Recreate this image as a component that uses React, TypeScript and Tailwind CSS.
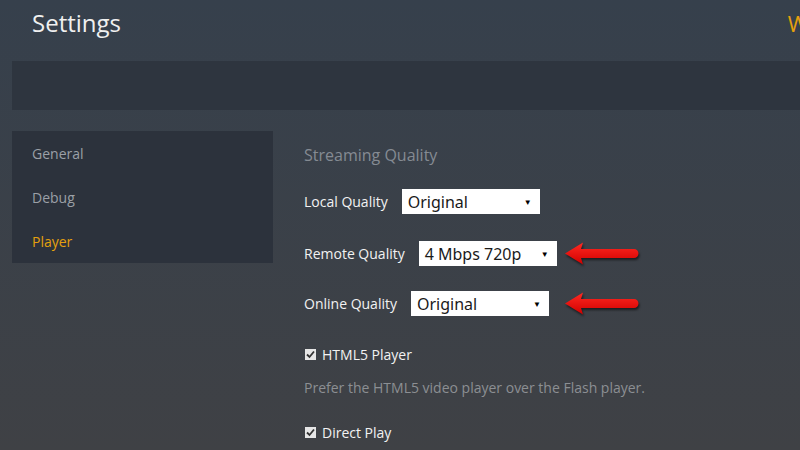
import React from 'react';

const Arrow = () => (
  <svg width="78" height="26" viewBox="0 0 78 26" className="drop-shadow-[1px_2px_1px_rgba(0,0,0,0.55)]">
    <defs>
      <linearGradient id="arrowFill" x1="0" y1="0" x2="0" y2="1">
        <stop offset="0" stopColor="#ff2a22" />
        <stop offset="1" stopColor="#d10000" />
      </linearGradient>
    </defs>
    <path
      d="M1 12.5 L19 1.5 L17 8 L70 8 A4.5 4.5 0 0 1 70 17 L17 17 L19 23.5 Z"
      fill="url(#arrowFill)"
    />
  </svg>
);

const Select = ({ value }: { value: string }) => (
  <div className="flex h-[25px] w-[138px] items-center justify-between bg-white pl-[6px] pr-[8px] font-['Noto_Sans',sans-serif] text-[16px] text-[#1a1a1a]">
    <span>{value}</span>
    <span className="text-[8px] text-black">▼</span>
  </div>
);

const Check = () => (
  <svg width="11" height="11" viewBox="0 0 11 11">
    <rect x="0" y="0" width="11" height="11" fill="#e6e6e6" />
    <path d="M2 5.5 L4.5 8 L9 2.5" stroke="#333" strokeWidth="1.8" fill="none" />
  </svg>
);

const QualityRow = ({ label, value, arrow, arrowGap, className }: { label: string; value: string; arrow?: boolean; arrowGap?: string; className?: string }) => (
  <div className={`flex h-[25px] items-center gap-[14px] ${className}`}>
    <span className="text-[14px] font-medium text-[#f2f2f2]">{label}</span>
    <Select value={value} />
    {arrow && <div className={arrowGap}><Arrow /></div>}
  </div>
);

const App = () => {
  const nav = ['General', 'Debug', 'Player'];

  return (
    <div className="h-[450px] w-[800px] overflow-hidden bg-gradient-to-b from-[#36404c] to-[#3f4145] font-['Open_Sans',sans-serif]">
      <div className="flex h-[46px] items-center overflow-hidden pl-8">
        <span className="text-[24px] text-[#f0f0f0]">Settings</span>
        <span className="-mr-[8px] ml-auto text-[22px] text-[#e5a00d]">W</span>
      </div>

      <div className="ml-3 mt-[15px] h-[49px] bg-[#2e353f]" />

      <div className="mt-[21px] flex items-start">
        <div className="ml-3 w-[261px] bg-[#2c323c]">
          {nav.map((item) => (
            <div
              key={item}
              className={`flex h-[44px] items-center pl-5 text-[14px] ${item === 'Player' ? 'text-[#e5a00d]' : 'text-[#9ba0a7]'}`}
            >
              {item}
            </div>
          ))}
        </div>

        <div className="ml-[31px] pt-[13px]">
          <div className="text-[16px] leading-[22px] text-[#858b93]">Streaming Quality</div>

          <QualityRow className="mt-[23px]" label="Local Quality" value="Original" />
          <QualityRow className="mt-[27px]" label="Remote Quality" value="4 Mbps 720p" arrow arrowGap="-ml-[7px]" />
          <QualityRow className="mt-[25px]" label="Online Quality" value="Original" arrow arrowGap="ml-[1px]" />

          <div className="mt-[28px] flex h-[20px] items-center gap-[6px] pl-[1px]">
            <Check />
            <span className="text-[14px] font-medium text-[#f2f2f2]">HTML5 Player</span>
          </div>
          <div className="mt-[14px] text-[14px] leading-[20px] text-[#8c8f93]">
            Prefer the HTML5 video player over the Flash player.
          </div>
          <div className="mt-[24px] flex h-[20px] items-center gap-[6px] pl-[1px]">
            <Check />
            <span className="text-[14px] font-medium text-[#f2f2f2]">Direct Play</span>
          </div>
        </div>
      </div>
    </div>
  );
};

export default App;
